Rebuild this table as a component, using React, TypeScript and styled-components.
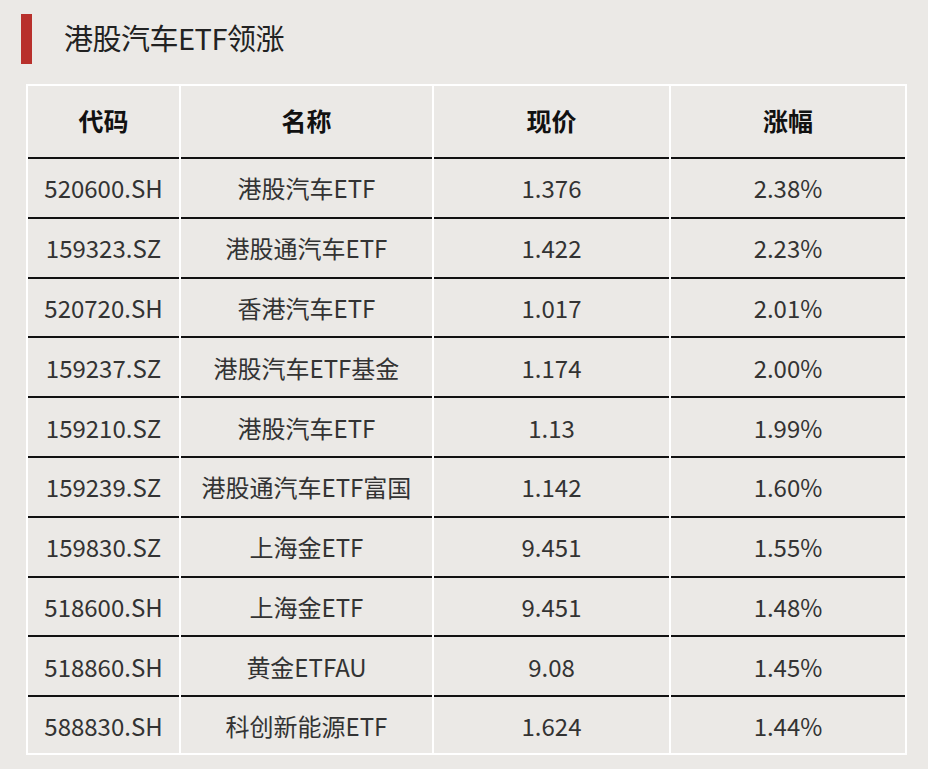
import styled, { createGlobalStyle } from 'styled-components';

const GlobalStyle = createGlobalStyle`
	html, body {
		margin: 0;
		padding: 0;
		background: #ebe9e6;
	}
	body {
		font-family: "Noto Sans CJK SC", "Liberation Sans", sans-serif;
	}
`

const Page = styled.div`
	width: 928px;
	height: 769px;
	background: #ebe9e6;
	padding: 14px 0 0 21px;
	box-sizing: border-box;
`

const TitleRow = styled.div`
	display: flex;
	align-items: center;
	height: 50px;
	gap: 32px;
`

const Bar = styled.div`
	width: 11px;
	height: 50px;
	background: #b8302c;
`

const Title = styled.h1`
	margin: 0 0 5px;
	font-size: 29px;
	font-weight: 400;
	color: #222;
	letter-spacing: -0.5px;
`

const Table = styled.div`
	margin: 20px 0 0 5px;
	width: 881px;
	box-sizing: border-box;
	display: grid;
	grid-template-columns: 151px 251px 235px 234px;
	column-gap: 2px;
	padding: 2px;
	background: #fff;
`

const Cell = styled.div<{ $head?: boolean; $last?: boolean }>`
	background: #ebe9e6;
	display: flex;
	align-items: center;
	justify-content: center;
	box-sizing: border-box;
	height: ${p => (p.$head ? '73px' : p.$last ? '56px' : '59.8px')};
	padding-bottom: ${p => (p.$head ? '3px' : '0')};
	border-bottom: ${p => (p.$last ? 'none' : '2px solid #111')};
	font-size: ${p => (p.$head ? '25px' : '24px')};
	font-weight: ${p => (p.$head ? 700 : 400)};
	color: ${p => (p.$head ? '#111' : '#333')};
	white-space: nowrap;
`

const head = ['代码', '名称', '现价', '涨幅'];

const rows = [
	['520600.SH', '港股汽车ETF', '1.376', '2.38%'],
	['159323.SZ', '港股通汽车ETF', '1.422', '2.23%'],
	['520720.SH', '香港汽车ETF', '1.017', '2.01%'],
	['159237.SZ', '港股汽车ETF基金', '1.174', '2.00%'],
	['159210.SZ', '港股汽车ETF', '1.13', '1.99%'],
	['159239.SZ', '港股通汽车ETF富国', '1.142', '1.60%'],
	['159830.SZ', '上海金ETF', '9.451', '1.55%'],
	['518600.SH', '上海金ETF', '9.451', '1.48%'],
	['518860.SH', '黄金ETFAU', '9.08', '1.45%'],
	['588830.SH', '科创新能源ETF', '1.624', '1.44%'],
];

const App = () => {
	return (
		<Page>
			<GlobalStyle />
			<TitleRow>
				<Bar />
				<Title>港股汽车ETF领涨</Title>
			</TitleRow>
			<Table>
				{head.map(h => (
					<Cell key={h} $head>{h}</Cell>
				))}
				{rows.map((r, i) =>
					r.map((c, j) => (
						<Cell key={i + '-' + j} $last={i === rows.length - 1}>{c}</Cell>
					))
				)}
			</Table>
		</Page>
	)
}

export default App;
